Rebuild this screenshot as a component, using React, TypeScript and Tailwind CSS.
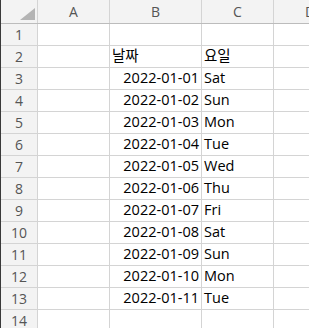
const cols = ['A', 'B', 'C', 'D'];

const rows: { date: string; day: string }[] = [
  { date: '', day: '' },
  { date: '날짜', day: '요일' },
  { date: '2022-01-01', day: 'Sat' },
  { date: '2022-01-02', day: 'Sun' },
  { date: '2022-01-03', day: 'Mon' },
  { date: '2022-01-04', day: 'Tue' },
  { date: '2022-01-05', day: 'Wed' },
  { date: '2022-01-06', day: 'Thu' },
  { date: '2022-01-07', day: 'Fri' },
  { date: '2022-01-08', day: 'Sat' },
  { date: '2022-01-09', day: 'Sun' },
  { date: '2022-01-10', day: 'Mon' },
  { date: '2022-01-11', day: 'Tue' },
  { date: '', day: '' },
];

const App = () => {
  return (
    <div
      className="w-[309px] h-[328px] overflow-hidden bg-white border-l border-[#3a3a3a] text-[14.5px] text-black"
      style={{ fontFamily: '"Open Sans", "Noto Sans CJK KR", sans-serif' }}
    >
      {/* column header */}
      <div className="flex h-[24px] bg-[#f3f3f3] border-b border-[#bcbcbc]">
        <div className="w-[37px] shrink-0 relative border-r border-[#d4d4d4]">
          <div
            className="absolute right-[2px] bottom-[3px] w-[15px] h-[12px] bg-[#b4b4b4]"
            style={{ clipPath: 'polygon(100% 0, 100% 100%, 0 100%)' }}
          />
        </div>
        {cols.map((c, i) => (
          <div
            key={c}
            className={`shrink-0 flex items-center justify-center text-[#555] text-[14px] ${
              i === 1 ? 'w-[92px]' : 'w-[72px]'
            } ${i < 3 ? 'border-r border-[#d4d4d4]' : ''}`}
          >
            {c}
          </div>
        ))}
      </div>

      {rows.map((r, idx) => (
        <div key={idx} className="flex h-[22px] border-b border-[#d4d4d4]">
          <div className="w-[37px] shrink-0 bg-[#f3f3f3] border-r border-[#d4d4d4] flex items-center justify-center text-[#555] text-[14px]">
            {idx + 1}
          </div>
          <div className="w-[72px] shrink-0 border-r border-[#d4d4d4]" />
          <div
            className={`w-[92px] shrink-0 border-r border-[#d4d4d4] flex items-center px-[2px] leading-none ${
              idx === 1 ? 'justify-start' : 'justify-end'
            }`}
          >
            {r.date}
          </div>
          <div className="w-[72px] shrink-0 border-r border-[#d4d4d4] flex items-center px-[2px] leading-none">
            {r.day}
          </div>
          <div className="flex-1" />
        </div>
      ))}
    </div>
  );
};

export default App;
